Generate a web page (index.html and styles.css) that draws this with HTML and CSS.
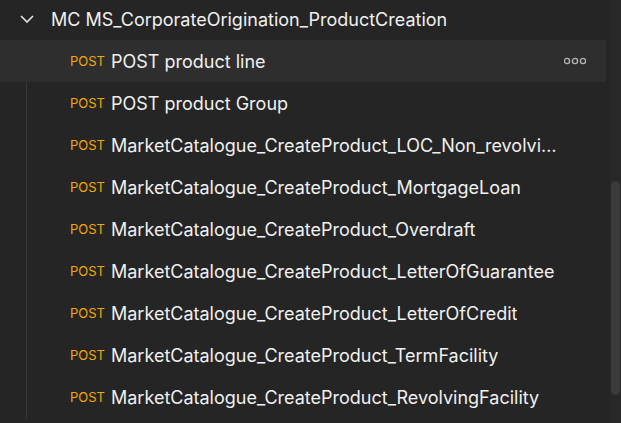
FILE: index.html
```
<!DOCTYPE html>
<html lang="en">
<head>
  <meta charset="UTF-8">
  <meta name="viewport" content="width=device-width, initial-scale=1.0">
  <title>Collection</title>
  <link rel="stylesheet" href="styles.css">
</head>
<body>
  <div id="sidebar">
    <div id="tree">
      <div class="folder">
        <svg class="chevron" width="14" height="8" viewBox="0 0 14 8">
          <path d="M1 1 L7 7 L13 1" fill="none" stroke="#e6e6e6" stroke-width="1.6"/>
        </svg>
        <span class="folder-name">MC MS_CorporateOrigination_ProductCreation</span>
      </div>

      <div class="request hovered">
        <span class="method">POST</span>
        <span class="name">POST product line</span>
        <svg class="more" width="22" height="8" viewBox="0 0 22 8">
          <circle cx="3" cy="4" r="2.6" fill="none" stroke="#b3b3b3" stroke-width="1.4"/>
          <circle cx="11" cy="4" r="2.6" fill="none" stroke="#b3b3b3" stroke-width="1.4"/>
          <circle cx="19" cy="4" r="2.6" fill="none" stroke="#b3b3b3" stroke-width="1.4"/>
        </svg>
      </div>
      <div class="request">
        <span class="method">POST</span>
        <span class="name">POST product Group</span>
      </div>
      <div class="request">
        <span class="method">POST</span>
        <span class="name">MarketCatalogue_CreateProduct_LOC_Non_revolving_Facility</span>
      </div>
      <div class="request">
        <span class="method">POST</span>
        <span class="name">MarketCatalogue_CreateProduct_MortgageLoan</span>
      </div>
      <div class="request">
        <span class="method">POST</span>
        <span class="name">MarketCatalogue_CreateProduct_Overdraft</span>
      </div>
      <div class="request">
        <span class="method">POST</span>
        <span class="name">MarketCatalogue_CreateProduct_LetterOfGuarantee</span>
      </div>
      <div class="request">
        <span class="method">POST</span>
        <span class="name">MarketCatalogue_CreateProduct_LetterOfCredit</span>
      </div>
      <div class="request">
        <span class="method">POST</span>
        <span class="name">MarketCatalogue_CreateProduct_TermFacility</span>
      </div>
      <div class="request">
        <span class="method">POST</span>
        <span class="name">MarketCatalogue_CreateProduct_RevolvingFacility</span>
      </div>
    </div>

    <div id="scrollbar">
      <div class="thumb"></div>
    </div>
  </div>
</body>
</html>
```

FILE: styles.css
```
body {
  margin: 0;
  height: 100vh;
  overflow: hidden;
  background-color: #252525;
  font-family: Inter, "Noto Sans", sans-serif;
  color: #f0f0f0;
}

#sidebar {
  display: flex;
  height: 100%;
}

#tree {
  flex: 1;
  min-width: 0;
  padding-right: 4px;
}

.folder {
  height: 40px;
  display: flex;
  align-items: center;
  padding-left: 20px;
}

.chevron {
  flex-shrink: 0;
  margin-top: -2px;
}

.folder-name {
  margin-left: 17px;
  font-size: 18px;
  margin-top: -2px;
  white-space: nowrap;
}

.request {
  height: 42px;
  display: flex;
  align-items: center;
  padding-left: 70px;
  padding-right: 20px;
  background-image: linear-gradient(#383838, #383838);
  background-size: 1px 100%;
  background-position: 26px 0;
  background-repeat: no-repeat;
}

.request.hovered {
  background-color: #2e2e2e;
  background-image: none;
}

.method {
  flex-shrink: 0;
  font-size: 13px;
  color: #efa80c;
  width: 41px;
}

.name {
  font-size: 18px;
  white-space: nowrap;
  overflow: hidden;
  text-overflow: ellipsis;
  max-width: 446px;
}

.more {
  margin-left: auto;
  flex-shrink: 0;
}

#scrollbar {
  width: 11px;
  background-color: #282828;
  padding-top: 181px;
}

.thumb {
  width: 9px;
  margin-left: 1px;
  height: 214px;
  border-radius: 5px;
  background-color: #3b3b3b;
}
```
